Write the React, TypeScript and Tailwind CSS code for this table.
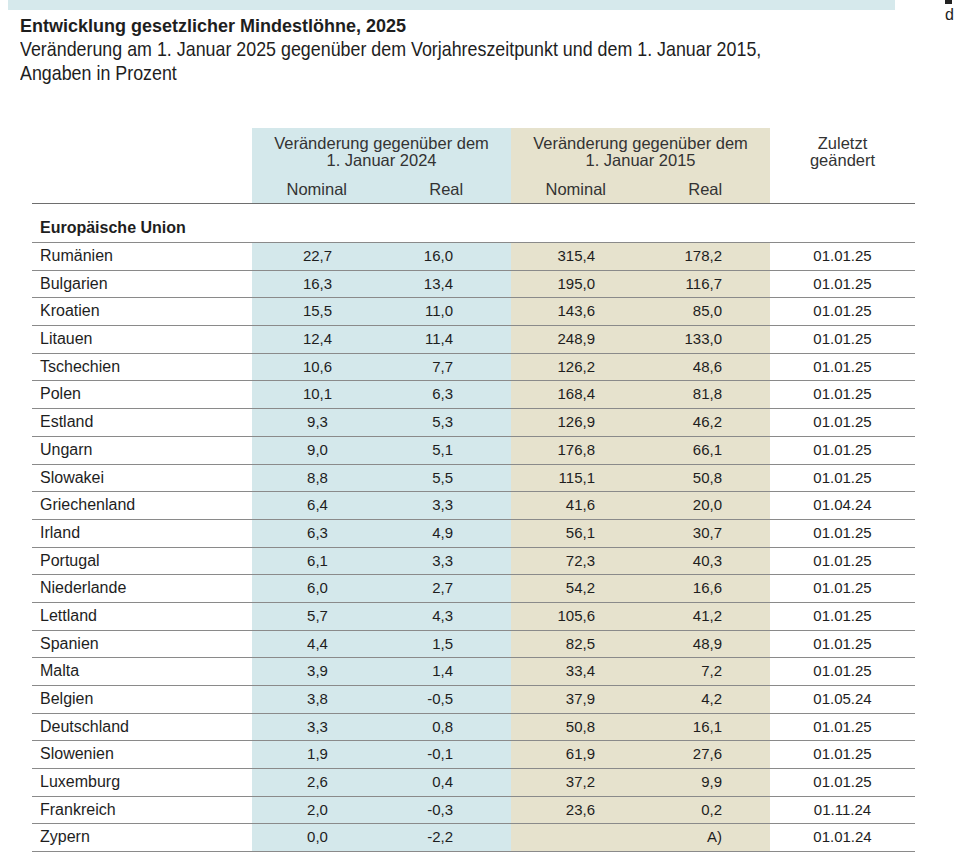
const ROWS: [string, string, string, string, string, string][] = [
  ["Rumänien", "22,7", "16,0", "315,4", "178,2", "01.01.25"],
  ["Bulgarien", "16,3", "13,4", "195,0", "116,7", "01.01.25"],
  ["Kroatien", "15,5", "11,0", "143,6", "85,0", "01.01.25"],
  ["Litauen", "12,4", "11,4", "248,9", "133,0", "01.01.25"],
  ["Tschechien", "10,6", "7,7", "126,2", "48,6", "01.01.25"],
  ["Polen", "10,1", "6,3", "168,4", "81,8", "01.01.25"],
  ["Estland", "9,3", "5,3", "126,9", "46,2", "01.01.25"],
  ["Ungarn", "9,0", "5,1", "176,8", "66,1", "01.01.25"],
  ["Slowakei", "8,8", "5,5", "115,1", "50,8", "01.01.25"],
  ["Griechenland", "6,4", "3,3", "41,6", "20,0", "01.04.24"],
  ["Irland", "6,3", "4,9", "56,1", "30,7", "01.01.25"],
  ["Portugal", "6,1", "3,3", "72,3", "40,3", "01.01.25"],
  ["Niederlande", "6,0", "2,7", "54,2", "16,6", "01.01.25"],
  ["Lettland", "5,7", "4,3", "105,6", "41,2", "01.01.25"],
  ["Spanien", "4,4", "1,5", "82,5", "48,9", "01.01.25"],
  ["Malta", "3,9", "1,4", "33,4", "7,2", "01.01.25"],
  ["Belgien", "3,8", "-0,5", "37,9", "4,2", "01.05.24"],
  ["Deutschland", "3,3", "0,8", "50,8", "16,1", "01.01.25"],
  ["Slowenien", "1,9", "-0,1", "61,9", "27,6", "01.01.25"],
  ["Luxemburg", "2,6", "0,4", "37,2", "9,9", "01.01.25"],
  ["Frankreich", "2,0", "-0,3", "23,6", "0,2", "01.11.24"],
  ["Zypern", "0,0", "-2,2", "", "A)", "01.01.24"],
];

export default function App() {
  return (
    <div className="flex h-[867px] w-[954px] overflow-hidden bg-white font-['Liberation_Sans',Arial,sans-serif] text-[#1e1e1e]">
      <div className="w-[935px] shrink-0">
        <div className="ml-2 h-[10px] w-[887px] bg-[#d6e9ec]" />

        <h1 className="ml-5 mt-[5px] text-[18px] font-bold leading-[22px]">Entwicklung gesetzlicher Mindestlöhne, 2025</h1>
        {/* subtitle, condensed like the print original */}
        <p className="ml-5 origin-left scale-x-[0.85] whitespace-nowrap text-[21px] leading-[24px]">
          Veränderung am 1. Januar 2025 gegenüber dem Vorjahreszeitpunkt und dem 1. Januar 2015,
          <br />
          Angaben in Prozent
        </p>

        <div className="ml-8 mt-[43px] w-[883px]">
          {/* header */}
          <div className="flex h-[76px] border-b border-[#6e6e6e] text-[16.5px] text-[#333]">
            <div className="w-[220px]" />
            <div className="flex w-[259px] flex-col bg-[#d4e8eb] pt-[7px] text-center leading-[17px]">
              <span>Veränderung gegenüber dem</span>
              <span>1. Januar 2024</span>
              <div className="mt-[12px] flex">
                <span className="w-1/2">Nominal</span>
                <span className="w-1/2">Real</span>
              </div>
            </div>
            <div className="flex w-[259px] flex-col bg-[#e6e2cd] pt-[7px] text-center leading-[17px]">
              <span>Veränderung gegenüber dem</span>
              <span>1. Januar 2015</span>
              <div className="mt-[12px] flex">
                <span className="w-1/2">Nominal</span>
                <span className="w-1/2">Real</span>
              </div>
            </div>
            <div className="flex w-[145px] flex-col pt-[7px] text-center leading-[17px]">
              <span>Zuletzt</span>
              <span>geändert</span>
            </div>
          </div>

          <div className="flex h-[39px] items-end border-b border-[#8a8a8a] pb-[2px] pl-2 text-[16px] font-bold">
            Europäische Union
          </div>

          {ROWS.map((r) => (
            <div key={r[0]} className="flex h-[27.7px] border-b border-[#8a8a8a] text-[15px] leading-[26.7px]">
              <div className="w-[220px] pl-2 text-[16px]">{r[0]}</div>
              <div className="flex w-[259px] bg-[#d4e8eb]">
                <span className="w-[131px] text-center">{r[1]}</span>
                <span className="w-[70px] text-right">{r[2]}</span>
              </div>
              <div className="flex w-[259px] bg-[#e6e2cd]">
                <span className="w-[84px] text-right">{r[3]}</span>
                <span className="w-[127px] text-right">{r[4]}</span>
              </div>
              <div className="w-[145px] text-center">{r[5]}</div>
            </div>
          ))}
        </div>
      </div>

      {/* clipped neighbour column */}
      <div className="flex flex-col pl-[10px] text-[16px] leading-none">
        <span className="h-[4px] w-[7px] bg-[#222]" />
        <span className="mt-[3px]">d</span>
      </div>
    </div>
  );
}
